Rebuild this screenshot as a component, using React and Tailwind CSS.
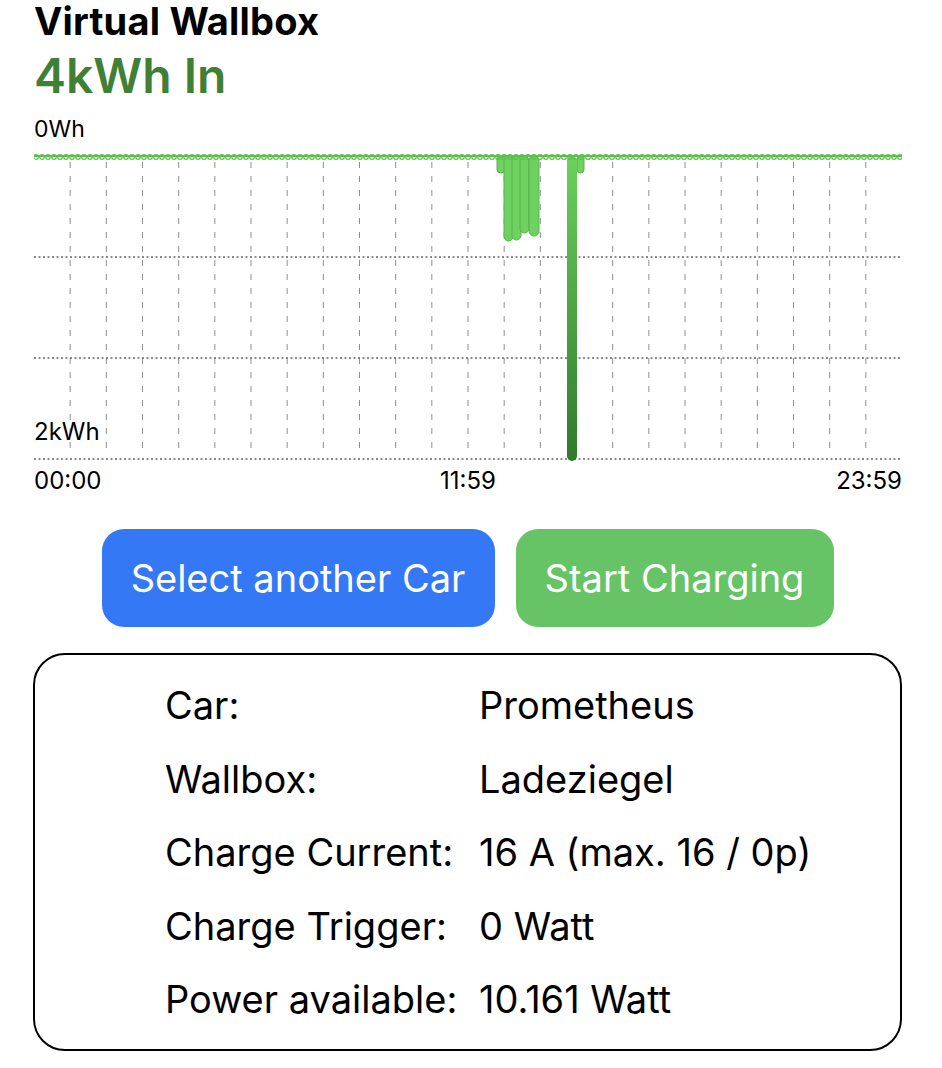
import React from "react";

const W = 868;
const H = 310;
const TOP = 4;
const ROW = 101;

const bars = [
  { x: 497, w: 8, y2: 174 },
  { x: 504, w: 9, y2: 242 },
  { x: 512, w: 9, y2: 241 },
  { x: 520, w: 9, y2: 234 },
  { x: 529, w: 10, y2: 237 },
  { x: 577, w: 7, y2: 174 },
];

function Chart() {
  const vlines = Array.from({ length: 23 }, (_, i) => (i + 1) * (W / 24));
  const dots = Array.from({ length: 145 }, (_, i) => i * 6 + 2);
  return (
    <div className="relative mt-[10px]">
      <svg width={W} height={H} viewBox={`0 0 ${W} ${H}`} className="block">
        <defs>
          <linearGradient id="tall" x1="0" y1="0" x2="0" y2="1">
            <stop offset="0" stopColor="#6bd15c" />
            <stop offset="1" stopColor="#2f7a2c" />
          </linearGradient>
        </defs>
        {vlines.map((x) => (
          <line key={x} x1={x} y1={TOP + 6} x2={x} y2={TOP + ROW * 3 - 4} stroke="#8f8f8f" strokeWidth="1" strokeDasharray="6 8" />
        ))}
        {[1, 2, 3].map((r) => (
          <line key={r} x1="0" y1={TOP + ROW * r} x2={W} y2={TOP + ROW * r} stroke="#666" strokeWidth="1.3" strokeDasharray="2 2.5" />
        ))}
        {bars.map((b) => (
          <rect key={b.x} x={b.x - 34} y={TOP} width={b.w} height={b.y2 - 153 - TOP} rx={b.w / 2} fill="#6fd160" stroke="#57b34b" strokeWidth="1" />
        ))}
        <rect x={567 - 34} y={TOP} width="10" height={ROW * 3 + 2} rx="5" fill="url(#tall)" />
        <line x1="0" y1={TOP} x2={W} y2={TOP} stroke="#5cbf4d" strokeWidth="2" />
        {dots.map((x) => (
          <circle key={x} cx={x} cy={TOP + 1} r="2.3" fill="none" stroke="#5cbf4d" strokeWidth="1.2" />
        ))}
      </svg>
      <span className="absolute left-0 top-[268px] text-[24px] leading-none text-black">2kWh</span>
    </div>
  );
}

function Row({ label, value }) {
  return (
    <div className="flex h-[73.5px] items-center">
      <span className="w-[314px] shrink-0 whitespace-nowrap">{label}</span>
      <span className="whitespace-nowrap">{value}</span>
    </div>
  );
}

export default function App() {
  return (
    <div className="min-h-[1068px] w-[942px] bg-white text-black" style={{ fontFamily: "Inter, 'Noto Sans', sans-serif" }}>
      <div className="ml-[34px] w-[868px]">
        <h1 className="text-[38px] font-bold leading-[43px] tracking-[0.2px]">Virtual Wallbox</h1>
        <div className="mt-[5px] text-[48px] font-semibold leading-[56px] text-[#3f8035]">4kWh In</div>
        <div className="mt-[12px] text-[23px] leading-[26px]">0Wh</div>
        <Chart />
        <div className="mt-[5px] flex justify-between text-[24px] leading-[28px]">
          <span className="w-[80px]">00:00</span>
          <span>11:59</span>
          <span className="w-[80px] text-right">23:59</span>
        </div>
      </div>
      <div className="mt-[34px] flex justify-center gap-[21px] pr-[7px] text-[38px] text-white">
        <button className="h-[98px] w-[393px] rounded-[22px] bg-[#3478f6]">Select another Car</button>
        <button className="h-[98px] w-[318px] rounded-[22px] bg-[#66c466]">Start Charging</button>
      </div>
      <div className="ml-[33px] mt-[26px] h-[398px] w-[869px] rounded-[32px] border-2 border-black pl-[130px] pt-[14px] text-[38px]">
        <Row label="Car:" value="Prometheus" />
        <Row label="Wallbox:" value="Ladeziegel" />
        <Row label="Charge Current:" value="16 A (max. 16 / 0p)" />
        <Row label="Charge Trigger:" value="0 Watt" />
        <Row label="Power available:" value="10.161 Watt" />
      </div>
    </div>
  );
}
